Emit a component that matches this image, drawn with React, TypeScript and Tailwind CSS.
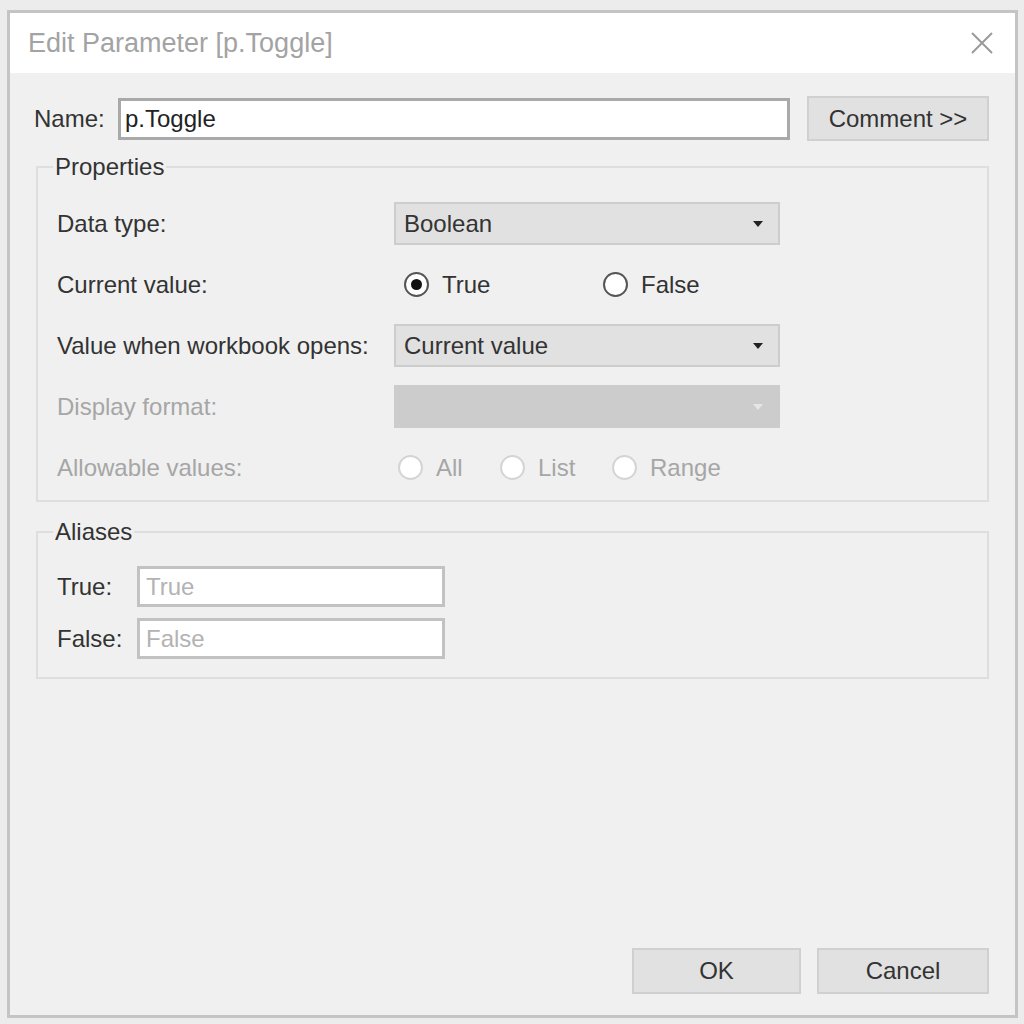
import React from "react";

const font = { fontFamily: '"Liberation Sans", Arial, sans-serif' };

function Dropdown({ value, disabled }: { value?: string; disabled?: boolean }) {
  return (
    <div
      className={
        "flex h-[43px] w-[386px] items-center justify-between border-2 pl-[8px] pr-[14px] " +
        (disabled ? "border-[#cccccc] bg-[#cccccc]" : "border-[#cdcdcd] bg-[#e1e1e1]")
      }
    >
      <span className="text-[#333333]">{value}</span>
      <svg width="12" height="8" viewBox="0 0 12 8">
        <path d="M1 1h10L6 7z" fill={disabled ? "#e6e6e6" : "#222222"} />
      </svg>
    </div>
  );
}

function Radio({ label, checked, disabled }: { label: string; checked?: boolean; disabled?: boolean }) {
  return (
    <label className="flex items-center gap-[13px]">
      <span
        className={
          "flex h-[25px] w-[25px] items-center justify-center rounded-full border-2 bg-white " +
          (disabled ? "border-[#d4d4d4]" : "border-[#555555]")
        }
      >
        {checked && <span className="h-[11px] w-[11px] rounded-full bg-[#111111]" />}
      </span>
      <span className={disabled ? "text-[#a6a6a6]" : "text-[#333333]"}>{label}</span>
    </label>
  );
}

function Row({ label, disabled, children }: { label: string; disabled?: boolean; children: React.ReactNode }) {
  return (
    <div className="flex h-[61px] items-center">
      <span className={"w-[337px] " + (disabled ? "text-[#a6a6a6]" : "text-[#333333]")}>{label}</span>
      {children}
    </div>
  );
}

function AliasInput({ label, placeholder }: { label: string; placeholder: string }) {
  return (
    <div className="flex items-center">
      <span className="w-[80px] text-[#333333]">{label}</span>
      <div className="flex h-[41px] w-[308px] items-center border-[3px] border-[#c2c2c2] bg-white pl-[6px] text-[#b3b3b3]">
        {placeholder}
      </div>
    </div>
  );
}

export default function App() {
  return (
    <div className="h-[1024px] w-[1024px] bg-[#ececec] pb-[6px] pl-[7px] pr-[6px] pt-[10px]" style={font}>
      <div className="flex h-full flex-col border-[3px] border-[#c4c4c4] bg-[#f0f0f0] text-[24px]">
        <div className="flex h-[60px] items-center justify-between bg-white pl-[18px] pr-[21px]">
          <span className="text-[27px] text-[#a3a3a3]">Edit Parameter [p.Toggle]</span>
          <svg width="24" height="24" viewBox="0 0 24 24">
            <path d="M2 2l20 20M22 2L2 22" stroke="#9a9a9a" strokeWidth="2" />
          </svg>
        </div>

        <div className="flex flex-1 flex-col pb-[21px] pl-[24px] pr-[26px] pt-[23px]">
          <div className="flex items-center">
            <span className="w-[84px] text-[#333333]">Name:</span>
            <div className="flex h-[42px] w-[672px] items-center border-[3px] border-[#a9a9a9] bg-white pl-[4px] text-[#222222]">
              p.Toggle
            </div>
            <button className="ml-auto h-[45px] w-[182px] border-2 border-[#d0d0d0] bg-[#e1e1e1] text-[#333333]">
              Comment &gt;&gt;
            </button>
          </div>

          <fieldset className="ml-[2px] mt-[8px] border-2 border-[#dedede] pb-[2px] pl-[19px] pt-[8px]">
            <legend className="ml-[-4px] px-[2px] text-[#333333]">Properties</legend>
            <Row label="Data type:">
              <Dropdown value="Boolean" />
            </Row>
            <Row label="Current value:">
              <div className="flex items-center">
                <div className="w-[209px] pl-[10px]">
                  <Radio label="True" checked />
                </div>
                <Radio label="False" />
              </div>
            </Row>
            <Row label="Value when workbook opens:">
              <Dropdown value="Current value" />
            </Row>
            <Row label="Display format:" disabled>
              <Dropdown disabled />
            </Row>
            <Row label="Allowable values:" disabled>
              <div className="flex items-center pl-[4px]">
                <div className="w-[102px]">
                  <Radio label="All" disabled />
                </div>
                <div className="w-[112px]">
                  <Radio label="List" disabled />
                </div>
                <Radio label="Range" disabled />
              </div>
            </Row>
          </fieldset>

          <fieldset className="ml-[2px] mt-[12px] flex flex-col gap-[11px] border-2 border-[#dedede] pb-[18px] pl-[19px] pt-[16px]">
            <legend className="ml-[-4px] px-[2px] text-[#333333]">Aliases</legend>
            <AliasInput label="True:" placeholder="True" />
            <AliasInput label="False:" placeholder="False" />
          </fieldset>

          <div className="mt-auto flex justify-end gap-[16px]">
            <button className="h-[46px] w-[169px] border-2 border-[#d0d0d0] bg-[#e1e1e1] text-[#333333]">OK</button>
            <button className="h-[46px] w-[172px] border-2 border-[#d0d0d0] bg-[#e1e1e1] text-[#333333]">Cancel</button>
          </div>
        </div>
      </div>
    </div>
  );
}
